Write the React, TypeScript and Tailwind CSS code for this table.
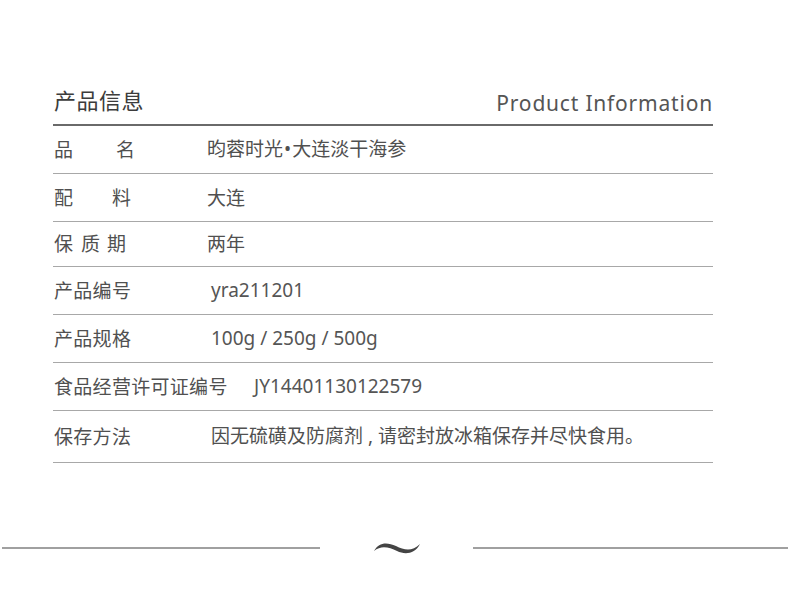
import React from "react";

const cjk = "font-['Noto_Sans_CJK_SC','Noto_Sans',sans-serif]";

function Row({ h, label, value, valueClass = "pl-[153px]" }: { h: string; label: React.ReactNode; value: React.ReactNode; valueClass?: string }) {
  return (
    <div className={`${h} flex items-center border-b border-[#a8a8a8] text-[19px] leading-none text-[#505050]`}>
      <div className="flex items-center pb-[3px]">
        <div className="pl-[1px] w-[0px] whitespace-nowrap">{label}</div>
        <div className={`${valueClass} whitespace-nowrap`}>{value}</div>
      </div>
    </div>
  );
}

export default function App() {
  return (
    <div className={`w-[790px] h-[615px] bg-white ${cjk} text-[#4a4a4a] overflow-hidden`}>
      <div className="ml-[53px] w-[660px] pt-[84px]">
        <div className="h-[42px] flex justify-between items-end border-b-2 border-[#6a6a6a]">
          <div className="pl-[1px] pb-[14px] text-[22px] leading-none tracking-[0.5px] text-[#3c3c3c]">产品信息</div>
          <div className="pb-[10px] font-['Noto_Sans',sans-serif] text-[21px] leading-none tracking-[0.8px] text-[#555]">Product Information</div>
        </div>
        <Row
          h="h-[48px]"
          label={<span><span>品</span><span className="ml-[43px]">名</span></span>}
          value={<span>昀蓉时光<span className="font-['Noto_Sans',sans-serif] mx-[1px]">•</span>大连淡干海参</span>}
        />
        <Row h="h-[48px]" label={<span><span>配</span><span className="ml-[39px]">料</span></span>} value="大连" />
        <Row h="h-[45px]" label={<span><span>保</span><span className="ml-[8px]">质</span><span className="ml-[7px]">期</span></span>} value="两年" />
        <Row h="h-[48px]" label={<span className="tracking-[0.3px]">产品编号</span>} value={<span className="pl-[4px] font-['Noto_Sans',sans-serif] text-[#555]">yra211201</span>} />
        <Row h="h-[48px]" label={<span className="tracking-[0.3px]">产品规格</span>} value={<span className="pl-[4px] font-['Noto_Sans',sans-serif] text-[#555]">100g / 250g / 500g</span>} />
        <Row h="h-[48px]" label={<span className="tracking-[0.3px]">食品经营许可证编号</span>} value={<span className="font-['Noto_Sans',sans-serif] text-[#555]">JY14401130122579</span>} valueClass="pl-[200px]" />
        <Row
          h="h-[52px]"
          label={<span className="tracking-[0.3px]">保存方法</span>}
          value={<span className="pl-[4px]">因无硫磺及防腐剂<span className="font-['Noto_Sans',sans-serif] mx-[5px]">,</span>请密封放冰箱保存并尽快食用。</span>}
        />
      </div>
      <div className="mt-[77px] flex items-center h-[16px]">
        <div className="ml-[2px] w-[318px] h-[2px] bg-[#a0a0a0]" />
        <div className="w-[153px] flex justify-center">
          <svg width="48" height="15" viewBox="0 0 48 15">
            <path d="M1 10 C 6 1, 14 1, 23 5 C 31 9, 39 11, 47 3 C 42 13, 32 14, 24 10 C 16 6, 8 4, 1 10 Z" fill="#444" />
          </svg>
        </div>
        <div className="w-[315px] h-[2px] bg-[#a0a0a0]" />
      </div>
    </div>
  );
}
